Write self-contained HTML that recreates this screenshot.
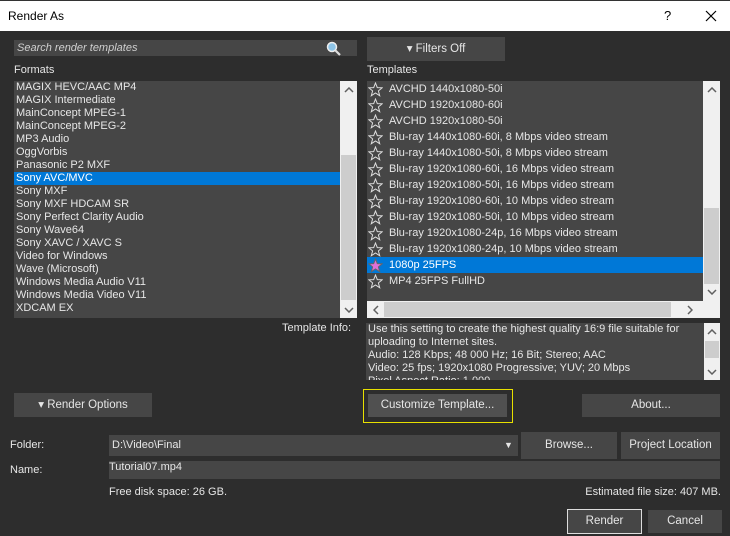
<!DOCTYPE html>
<html><head><style>
*{margin:0;padding:0;box-sizing:border-box}
body{width:730px;height:536px;background:#2d2d2d;font-family:"Liberation Sans",sans-serif;font-size:11px;color:#e6e6e6;position:relative;overflow:hidden}
.a{position:absolute;white-space:nowrap}
.title{left:0;top:0;width:730px;height:31px;background:#fff;border-top:1px solid #333;color:#000}
.btn{position:absolute;background:#464646;color:#e6e6e6;text-align:center;font-size:11.5px}
.list{background:#464646}
.row{position:absolute;left:0;height:13px;line-height:13px;padding-left:2px;white-space:nowrap}
.trow{position:absolute;left:0;height:16px;line-height:16px;white-space:nowrap;width:336px}
.trow span{position:absolute;left:22px}
.star{position:absolute;left:1px;top:1px}
.vs{background:#f0f0f0}
.thumb{background:#cdcdcd;position:absolute}
.arr{position:absolute}
</style></head><body>
<div class="a title"><div class="a" style="left:8px;top:8px;font-size:12px">Render As</div>
<div class="a" style="left:664px;top:7px;font-size:13px">?</div>
<svg class="a" style="left:705px;top:9px" width="12" height="12"><path d="M1 1L11 11M11 1L1 11" stroke="#000" stroke-width="1.2"/></svg></div>

<div class="a" style="left:14px;top:40px;width:343px;height:16px;background:#464646"></div>
<div class="a" style="left:17px;top:40px;line-height:16px;font-style:italic;color:#cfcfcf">Search render templates</div>
<svg class="a" style="left:326px;top:41px" width="15" height="15"><circle cx="6" cy="6" r="4.5" fill="#8ec5e8" stroke="#eee" stroke-width="1.5"/><path d="M9.5 9.5L14 14" stroke="#ddd" stroke-width="2.2"/></svg>
<div class="a" style="left:14px;top:64px">Formats</div>

<svg width="0" height="0" style="position:absolute"><defs>
<path id="s" d="M7.5 1L9.3 5.6 14.2 5.8 10.4 8.9 11.7 13.7 7.5 11 3.3 13.7 4.6 8.9 0.8 5.8 5.7 5.6Z"/>
<path id="up" d="M1 5L5 1 9 5" fill="none" stroke="#606060" stroke-width="1.5"/>
<path id="dn" d="M1 1L5 5 9 1" fill="none" stroke="#606060" stroke-width="1.5"/>
<path id="lf" d="M5 1L1 5 5 9" fill="none" stroke="#606060" stroke-width="1.5"/>
<path id="rt" d="M1 1L5 5 1 9" fill="none" stroke="#606060" stroke-width="1.5"/>
</defs></svg>

<div class="a list" style="left:14px;top:81px;width:326px;height:237px">
<div class="row" style="top:0">MAGIX HEVC/AAC MP4</div>
<div class="row" style="top:13px">MAGIX Intermediate</div>
<div class="row" style="top:26px">MainConcept MPEG-1</div>
<div class="row" style="top:39px">MainConcept MPEG-2</div>
<div class="row" style="top:52px">MP3 Audio</div>
<div class="row" style="top:65px">OggVorbis</div>
<div class="row" style="top:78px">Panasonic P2 MXF</div>
<div class="row" style="top:91px;width:326px;background:#0078d7;color:#fff">Sony AVC/MVC</div>
<div class="row" style="top:104px">Sony MXF</div>
<div class="row" style="top:117px">Sony MXF HDCAM SR</div>
<div class="row" style="top:130px">Sony Perfect Clarity Audio</div>
<div class="row" style="top:143px">Sony Wave64</div>
<div class="row" style="top:156px">Sony XAVC / XAVC S</div>
<div class="row" style="top:169px">Video for Windows</div>
<div class="row" style="top:182px">Wave (Microsoft)</div>
<div class="row" style="top:195px">Windows Media Audio V11</div>
<div class="row" style="top:208px">Windows Media Video V11</div>
<div class="row" style="top:221px">XDCAM EX</div>
</div>
<div class="a vs" style="left:340px;top:81px;width:17px;height:237px"><div class="thumb" style="left:1px;top:74px;width:15px;height:145px"></div>
<svg class="arr" style="left:4px;top:6px" width="10" height="6"><use href="#up"/></svg><svg class="arr" style="left:4px;top:226px" width="10" height="6"><use href="#dn"/></svg></div>

<div class="btn" style="left:367px;top:37px;width:138px;height:24px;line-height:24px">&#9662; Filters Off</div>
<div class="a" style="left:367px;top:64px">Templates</div>

<div class="a list" style="left:367px;top:81px;width:336px;height:220px">
<div class="trow" style="top:0"><svg class="star" width="15" height="15"><use href="#s" fill="none" stroke="#ddd"/></svg><span>AVCHD 1440x1080-50i</span></div>
<div class="trow" style="top:16px"><svg class="star" width="15" height="15"><use href="#s" fill="none" stroke="#ddd"/></svg><span>AVCHD 1920x1080-60i</span></div>
<div class="trow" style="top:32px"><svg class="star" width="15" height="15"><use href="#s" fill="none" stroke="#ddd"/></svg><span>AVCHD 1920x1080-50i</span></div>
<div class="trow" style="top:48px"><svg class="star" width="15" height="15"><use href="#s" fill="none" stroke="#ddd"/></svg><span>Blu-ray 1440x1080-60i, 8 Mbps video stream</span></div>
<div class="trow" style="top:64px"><svg class="star" width="15" height="15"><use href="#s" fill="none" stroke="#ddd"/></svg><span>Blu-ray 1440x1080-50i, 8 Mbps video stream</span></div>
<div class="trow" style="top:80px"><svg class="star" width="15" height="15"><use href="#s" fill="none" stroke="#ddd"/></svg><span>Blu-ray 1920x1080-60i, 16 Mbps video stream</span></div>
<div class="trow" style="top:96px"><svg class="star" width="15" height="15"><use href="#s" fill="none" stroke="#ddd"/></svg><span>Blu-ray 1920x1080-50i, 16 Mbps video stream</span></div>
<div class="trow" style="top:112px"><svg class="star" width="15" height="15"><use href="#s" fill="none" stroke="#ddd"/></svg><span>Blu-ray 1920x1080-60i, 10 Mbps video stream</span></div>
<div class="trow" style="top:128px"><svg class="star" width="15" height="15"><use href="#s" fill="none" stroke="#ddd"/></svg><span>Blu-ray 1920x1080-50i, 10 Mbps video stream</span></div>
<div class="trow" style="top:144px"><svg class="star" width="15" height="15"><use href="#s" fill="none" stroke="#ddd"/></svg><span>Blu-ray 1920x1080-24p, 16 Mbps video stream</span></div>
<div class="trow" style="top:160px"><svg class="star" width="15" height="15"><use href="#s" fill="none" stroke="#ddd"/></svg><span>Blu-ray 1920x1080-24p, 10 Mbps video stream</span></div>
<div class="trow" style="top:176px;background:#0078d7;color:#fff"><svg class="star" width="15" height="15"><use href="#s" fill="#e070d8" stroke="#666"/></svg><span>1080p 25FPS</span></div>
<div class="trow" style="top:192px"><svg class="star" width="15" height="15"><use href="#s" fill="none" stroke="#ddd"/></svg><span>MP4 25FPS FullHD</span></div>
</div>
<div class="a vs" style="left:703px;top:81px;width:17px;height:220px"><div class="thumb" style="left:1px;top:127px;width:15px;height:76px"></div>
<svg class="arr" style="left:4px;top:6px" width="10" height="6"><use href="#up"/></svg><svg class="arr" style="left:4px;top:208px" width="10" height="6"><use href="#dn"/></svg></div>
<div class="a vs" style="left:367px;top:301px;width:353px;height:17px"><div class="thumb" style="left:17px;top:1px;width:287px;height:15px"></div>
<svg class="arr" style="left:6px;top:4px" width="6" height="10"><use href="#lf"/></svg><svg class="arr" style="left:320px;top:4px" width="6" height="10"><use href="#rt"/></svg></div>

<div class="a" style="left:282px;top:322px">Template Info:</div>
<div class="a list" style="left:366px;top:323px;width:338px;height:57px;overflow:hidden;line-height:13px;padding-left:2px">Use this setting to create the highest quality 16:9 file suitable for<br>uploading to Internet sites.<br>Audio: 128 Kbps; 48 000 Hz; 16 Bit; Stereo; AAC<br>Video: 25 fps; 1920x1080 Progressive; YUV; 20 Mbps<br>Pixel Aspect Ratio: 1.000</div>
<div class="a vs" style="left:704px;top:323px;width:16px;height:57px"><div class="thumb" style="left:1px;top:18px;width:14px;height:17px"></div>
<svg class="arr" style="left:3px;top:6px" width="10" height="6"><use href="#up"/></svg><svg class="arr" style="left:3px;top:46px" width="10" height="6"><use href="#dn"/></svg></div>

<div class="btn" style="left:14px;top:393px;width:138px;height:24px;line-height:24px">&#9662; Render Options</div>
<div class="a" style="left:363px;top:389px;width:150px;height:34px;border:1px solid #e8e000"></div>
<div class="btn" style="left:368px;top:394px;width:139px;height:23px;line-height:23px;background:#505050">Customize Template...</div>
<div class="btn" style="left:582px;top:394px;width:138px;height:23px;line-height:23px">About...</div>

<div class="a" style="left:10px;top:439px">Folder:</div>
<div class="a list" style="left:109px;top:435px;width:409px;height:21px;line-height:21px;padding-left:3px">D:\Video\Final</div>
<div class="a" style="left:504px;top:435px;line-height:21px;font-size:9px">&#9660;</div>
<div class="btn" style="left:521px;top:432px;width:96px;height:27px;line-height:27px">Browse...</div>
<div class="btn" style="left:621px;top:432px;width:99px;height:27px;line-height:27px">Project Location</div>
<div class="a" style="left:10px;top:464px">Name:</div>
<div class="a list" style="left:109px;top:461px;width:611px;height:18px;line-height:13px">Tutorial07.mp4</div>
<div class="a" style="left:109px;top:486px">Free disk space: 26 GB.</div>
<div class="a" style="right:9px;top:486px">Estimated file size: 407 MB.</div>
<div class="btn" style="left:567px;top:509px;width:75px;height:25px;line-height:23px;border:1px solid #ddd">Render</div>
<div class="btn" style="left:648px;top:510px;width:74px;height:23px;line-height:23px">Cancel</div>
</body></html>
